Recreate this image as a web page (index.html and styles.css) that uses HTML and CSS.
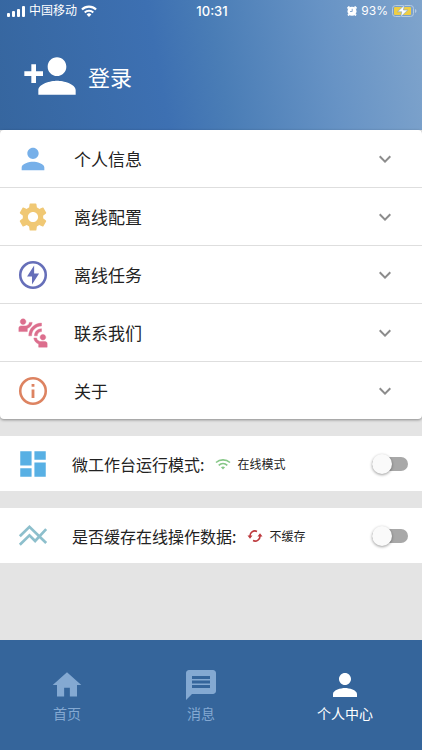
FILE: index.html
```html
<!DOCTYPE html>
<html lang="zh-CN">
<head>
<meta charset="utf-8">
<meta name="viewport" content="width=device-width, initial-scale=1">
<title>个人中心</title>
<link rel="stylesheet" href="styles.css">
</head>
<body>
<header class="header">
  <div class="status">
    <div class="status-left">
      <svg class="signal" viewBox="0 0 18 11" aria-hidden="true"><rect x="0" y="7" width="3" height="4" rx="1"/><rect x="5" y="5" width="3" height="6" rx="1"/><rect x="10" y="3" width="3" height="8" rx="1"/><rect x="15" y="0" width="3" height="11" rx="1"/></svg>
      <span>中国移动</span>
      <svg class="wifi" viewBox="0 0 16 12" aria-hidden="true"><path d="M8 12 5.6 9.4a3.5 3.5 0 0 1 4.8 0zM3 6.700a7.200 7.200 0 0 1 10 0l-1.500 1.600a5 5 0 0 0-7 0zM.2 3.700a11.200 11.200 0 0 1 15.600 0l-1.500 1.600a9 9 0 0 0-12.600 0z"/></svg>
    </div>
    <time class="clock">10:31</time>
    <div class="status-right">
      <svg class="alarm" viewBox="0 0 10 10" aria-hidden="true"><circle cx="5" cy="5.300" r="4.500"/><path d="M.5 2.500 2.500.5M9.500 2.500 7.500.5M2 8.500l-1 1M8 8.500l1 1" stroke="#fff" stroke-width="1.800"/><path d="M5.200 2.800v2.700H3" fill="none" stroke="#7d9fca" stroke-width=".9"/></svg>
      <span>93%</span>
      <svg class="battery" viewBox="0 0 25 12" aria-hidden="true"><rect x=".5" y=".5" width="21" height="11" rx="3" fill="none" stroke="#b6cbe1"/><path d="M23 4v4q1.500-.5 1.500-2T23 4" fill="#b6cbe1"/><rect x="2" y="2" width="17" height="8" rx="1" fill="#efce45"/><path d="M12.500 0 5.500 6.800h4.300L8.600 12l7.200-7h-4.400z" fill="#fff" stroke="#7ba0cb" stroke-width=".6"/></svg>
    </div>
  </div>
  <a class="login" href="#login">
    <svg class="login-icon" viewBox="0 0 24 24" aria-hidden="true"><path d="M15 12c2.210 0 4-1.790 4-4s-1.790-4-4-4-4 1.790-4 4 1.790 4 4 4zm-9-2V7H4v3H1v2h3v3h2v-3h3v-2H6zm9 4c-2.670 0-8 1.340-8 4v2h16v-2c0-2.660-5.330-4-8-4z"/></svg>
    <span>登录</span>
  </a>
</header>

<main class="content">
  <div class="menu">
    <button class="row" type="button">
      <svg class="icon person" viewBox="0 0 24 24" aria-hidden="true"><path d="M12 12c2.210 0 4-1.790 4-4s-1.790-4-4-4-4 1.790-4 4 1.790 4 4 4zm0 2c-2.670 0-8 1.340-8 4v2h16v-2c0-2.660-5.330-4-8-4z"/></svg>
      <span class="label">个人信息</span>
      <svg class="chevron" viewBox="0 0 24 24" aria-hidden="true"><path d="M7.410 8.590 12 13.170l4.590-4.580L18 10l-6 6-6-6z"/></svg>
    </button>
    <button class="row" type="button">
      <svg class="icon gear" viewBox="0 0 24 24" aria-hidden="true"><path d="M19.140 12.940c.04-.3.06-.61.06-.94 0-.32-.02-.64-.07-.94l2.030-1.580c.18-.14.23-.41.12-.61l-1.920-3.320c-.12-.22-.37-.29-.59-.22l-2.390.96c-.5-.38-1.030-.7-1.620-.94l-.36-2.540c-.04-.24-.24-.41-.48-.41h-3.840c-.24 0-.43.17-.47.41l-.36 2.540c-.59.24-1.130.57-1.620.94l-2.390-.96c-.22-.08-.47 0-.59.22L2.740 8.870c-.12.21-.08.47.12.61l2.030 1.580c-.05.3-.09.63-.09.94s.02.64.07.94l-2.030 1.580c-.18.14-.23.41-.12.61l1.920 3.320c.12.22.37.29.59.22l2.390-.96c.5.38 1.030.7 1.620.94l.36 2.540c.05.24.24.41.48.41h3.840c.24 0 .44-.17.47-.41l.36-2.540c.59-.24 1.130-.56 1.620-.94l2.390.96c.22.08.47 0 .59-.22l1.920-3.320c.12-.22.07-.47-.12-.61l-2.010-1.580zM12 15.600c-1.980 0-3.600-1.620-3.600-3.600s1.620-3.600 3.600-3.600 3.600 1.620 3.600 3.600-1.620 3.600-3.600 3.600z"/></svg>
      <span class="label">离线配置</span>
      <svg class="chevron" viewBox="0 0 24 24" aria-hidden="true"><path d="M7.410 8.590 12 13.170l4.590-4.580L18 10l-6 6-6-6z"/></svg>
    </button>
    <button class="row" type="button">
      <svg class="icon bolt" viewBox="0 0 24 24" aria-hidden="true"><circle cx="12" cy="12" r="9" fill="none" stroke="currentColor" stroke-width="1.800"/><path d="M12.800 5.300 7.800 13h3.500v5.700l5-7.700h-3.500z"/></svg>
      <span class="label">离线任务</span>
      <svg class="chevron" viewBox="0 0 24 24" aria-hidden="true"><path d="M7.410 8.590 12 13.170l4.590-4.580L18 10l-6 6-6-6z"/></svg>
    </button>
    <button class="row" type="button">
      <svg class="icon contact" viewBox="0 0 24 24" aria-hidden="true"><path d="M11 14H9c0-4.970 4.030-9 9-9v2c-3.870 0-7 3.130-7 7zm7-3V9c-2.760 0-5 2.240-5 5h2c0-1.660 1.340-3 3-3zM7 4c0-1.110-.89-2-2-2s-2 .89-2 2 .89 2 2 2 2-.89 2-2zm4.450.5h-2C9.210 5.920 7.990 7 6.500 7h-3C2.670 7 2 7.670 2 8.500V11h6V8.740c1.860-.59 3.250-2.230 3.450-4.240zM19 17c1.110 0 2-.89 2-2s-.89-2-2-2-2 .89-2 2 .89 2 2 2zm1.500 1h-3c-1.490 0-2.710-1.080-2.950-2.500h-2c.2 2.010 1.590 3.650 3.450 4.240V22h6v-2.500c0-.83-.67-1.500-1.500-1.500z" stroke="currentColor" stroke-width=".3"/></svg>
      <span class="label">联系我们</span>
      <svg class="chevron" viewBox="0 0 24 24" aria-hidden="true"><path d="M7.410 8.590 12 13.170l4.590-4.580L18 10l-6 6-6-6z"/></svg>
    </button>
    <button class="row" type="button">
      <svg class="icon info" viewBox="0 0 24 24" aria-hidden="true"><circle cx="12" cy="12" r="9" fill="none" stroke="currentColor" stroke-width="1.800"/><path d="M11 7h2v2h-2zm0 4h2v6h-2z"/></svg>
      <span class="label">关于</span>
      <svg class="chevron" viewBox="0 0 24 24" aria-hidden="true"><path d="M7.410 8.590 12 13.170l4.590-4.580L18 10l-6 6-6-6z"/></svg>
    </button>
  </div>

  <div class="setting">
    <svg class="icon dashboard" viewBox="0 0 24 24" aria-hidden="true"><path d="M3 13h8V3H3v10zm0 8h8v-6H3v6zm10 0h8V11h-8v10zm0-18v6h8V3h-8z"/></svg>
    <label class="name" for="mode">微工作台运行模式:</label>
    <svg class="mini online" viewBox="0 0 16 16" aria-hidden="true"><path d="M1 6.500a10.500 10.500 0 0 1 14 0M3.700 9.300a6.500 6.500 0 0 1 8.600 0" fill="none" stroke="currentColor" stroke-width="1.600"/><path d="M8 13.500 5.900 11.300a3.200 3.200 0 0 1 4.200 0z"/></svg>
    <span class="value">在线模式</span>
    <input class="switch" id="mode" type="checkbox" role="switch">
  </div>

  <div class="setting">
    <svg class="icon lines" viewBox="0 0 24 24" aria-hidden="true"><path d="M2.700 12.200 9.500 5.500 21.300 17M2.700 18.200l6.800-6.700 4 4 7.800-8.300" fill="none" stroke="currentColor" stroke-width="1.900"/></svg>
    <label class="name" for="cache">是否缓存在线操作数据:</label>
    <svg class="mini nocache" viewBox="0 0 16 16" aria-hidden="true"><path d="M10 3.400A5 5 0 0 0 3 8.500M6 12.600A5 5 0 0 0 13 7.500" fill="none" stroke="currentColor" stroke-width="1.600"/><path d="M.5 7.500h5L3 10.800zM10.500 8.500h5L13 5.200z"/></svg>
    <span class="value">不缓存</span>
    <input class="switch" id="cache" type="checkbox" role="switch">
  </div>
</main>

<nav class="tabs">
  <a class="tab" href="#home">
    <svg class="tab-icon" viewBox="-.6 -.6 25.200 25.200" aria-hidden="true"><path d="M10 20v-6h4v6h5v-8h3L12 3 2 12h3v8z"/></svg>
    <span>首页</span>
  </a>
  <a class="tab" href="#messages">
    <svg class="tab-icon" viewBox="0 0 24 24" aria-hidden="true"><path d="M20 2H4c-1.100 0-1.990.9-1.990 2L2 22l4-4h14c1.100 0 2-.9 2-2V4c0-1.100-.9-2-2-2zM6 6h12v2H6zm0 3h12v2H6zm0 3h12v2H6z" fill-rule="evenodd"/></svg>
    <span>消息</span>
  </a>
  <a class="tab active" href="#me" aria-current="page">
    <svg class="tab-icon" viewBox="0 0 24 24" aria-hidden="true"><path d="M12 12c2.210 0 4-1.790 4-4s-1.790-4-4-4-4 1.790-4 4 1.790 4 4 4zm0 2c-2.670 0-8 1.340-8 4v2h16v-2c0-2.660-5.330-4-8-4z"/></svg>
    <span>个人中心</span>
  </a>
</nav>
</body>
</html>
```
FILE: styles.css
```css
* {
  box-sizing: border-box;
}

body {
  margin: 0;
  min-height: 100vh;
  display: flex;
  flex-direction: column;
  background: #e4e4e4;
  color: #222;
  font-family: "Noto Sans CJK SC", sans-serif;
}

svg {
  display: block;
  flex: none;
  fill: currentColor;
}

a {
  color: inherit;
  text-decoration: none;
}

.header {
  height: 130px;
  background: linear-gradient(80deg, #36669f 0%, #3d70b2 38%, #4a7db6 52%, #6793c5 77%, #7fa4cc 100%);
  color: #fff;
}

.status {
  height: 22px;
  padding: 0 5px 0 7px;
  display: grid;
  grid-template-columns: 1fr auto 1fr;
  align-items: center;
  font-family: Inter, "Noto Sans CJK SC", sans-serif;
  font-size: 12px;
  line-height: 20px;
}

.status-left,
.status-right {
  display: flex;
  align-items: center;
  gap: 4px;
}

.status-right {
  justify-content: flex-end;
}

.signal {
  width: 18px;
  height: 11px;
}

.wifi {
  width: 16px;
  height: 12px;
}

.clock {
  font-size: 13px;
  font-weight: 500;
}

.alarm {
  width: 10px;
  height: 10px;
}

.battery {
  width: 25px;
  height: 12px;
}

.login {
  display: inline-flex;
  align-items: center;
  gap: 10px;
  margin: 26px 0 0 22px;
  font-size: 22px;
  line-height: 32px;
}

.login-icon {
  width: 56px;
  height: 56px;
}

.content {
  flex: 1;
}

.menu {
  border-radius: 4px;
  background: #fff;
  box-shadow: 0 1px 3px rgba(0, 0, 0, 0.4);
}

.row {
  width: 100%;
  height: 58px;
  padding: 0 25px 0 16px;
  display: flex;
  align-items: center;
  gap: 24px;
  border: 0;
  border-bottom: 1px solid #dedede;
  background: none;
  color: inherit;
  font: inherit;
  font-size: 17px;
  line-height: 24px;
  text-align: left;
}

.row:last-child {
  height: 57px;
  border-bottom: 0;
}

.label {
  flex: 1;
}

.icon {
  width: 34px;
  height: 34px;
}

.chevron {
  width: 24px;
  height: 24px;
  color: #8c8c8c;
}

.person {
  color: #77b0e9;
}

.gear {
  color: #f0c874;
}

.bolt {
  color: #666fb9;
}

.contact {
  color: #dc6e8d;
}

.info {
  color: #dd8361;
}

.dashboard {
  color: #58b0e4;
}

.lines {
  color: #8dbfcc;
}

.setting {
  height: 55px;
  margin-top: 17px;
  padding: 0 14px 0 16px;
  display: flex;
  align-items: center;
  background: #fff;
}

.name {
  margin-left: 22px;
  font-size: 16px;
  line-height: 24px;
}

.mini {
  width: 16px;
  height: 16px;
  margin: 0 6px 0 11px;
}

.online {
  color: #86c787;
}

.nocache {
  color: #bd3a3e;
}

.value {
  font-size: 12px;
  line-height: 20px;
}

.switch {
  appearance: none;
  position: relative;
  width: 36px;
  height: 14px;
  margin: 0 0 0 auto;
  border-radius: 7px;
  background: #a8a8a8;
}

.switch::before {
  content: "";
  position: absolute;
  top: -3px;
  left: 0;
  width: 20px;
  height: 20px;
  border-radius: 50%;
  background: #fafafa;
  box-shadow: 0 1px 3px rgba(0, 0, 0, 0.4);
}

.switch:checked::before {
  left: 16px;
}

.tabs {
  height: 110px;
  display: flex;
  justify-content: space-around;
  background: #35659b;
  color: #84a9d2;
}

.tab {
  display: flex;
  flex-direction: column;
  align-items: center;
  padding-top: 27px;
  font-size: 14px;
  line-height: 20px;
}

.tab-icon {
  width: 36px;
  height: 36px;
}

.active {
  color: #fff;
}
```
